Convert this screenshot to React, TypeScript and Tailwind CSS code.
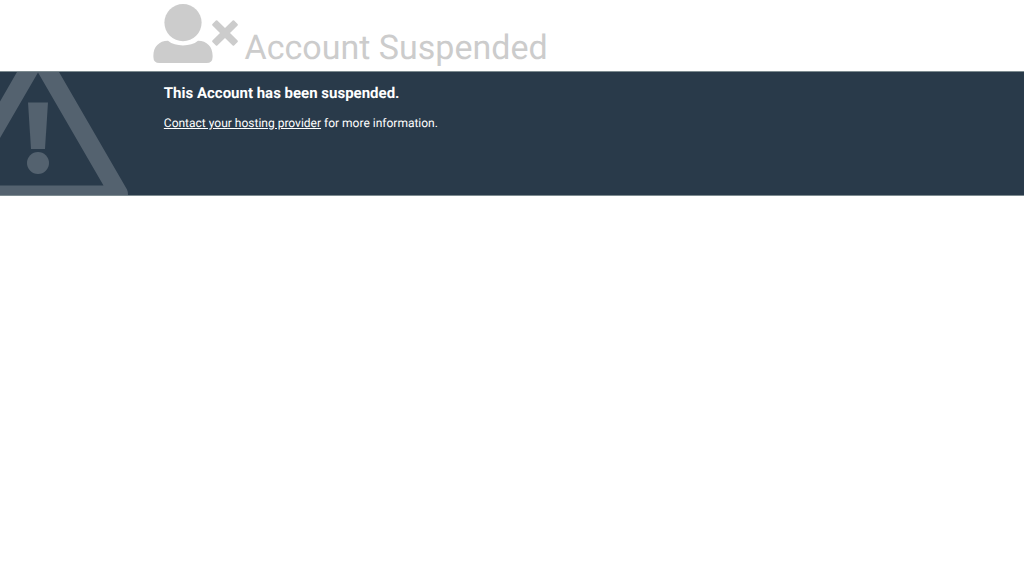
function SuspendedUserIcon() {
  return (
    <svg
      aria-hidden="true"
      viewBox="1 0 85 60"
      className="h-[60px] w-[85px] shrink-0 overflow-visible fill-[#cccccc]"
    >
      <circle cx="30" cy="18.6" r="18.6" />
      <path d="M15 36.8C19 40.2 24 41.4 30 41.4S41 40.2 45 36.8C54 36.8 59.6 43 59.6 51.5V53Q59.6 59 53.5 59H6.5Q.4 59 .4 53V51.5C.4 43 6 36.8 15 36.8Z" />
      <path d="M64.3 16.6L72 24.1L79.7 16.6Q80.4 16 81.1 16.6L84.6 20.1Q85.2 20.8 84.6 21.5L77 29L84.6 36.5Q85.2 37.2 84.6 37.9L81.1 41.4Q80.4 42 79.7 41.4L72 33.9L64.3 41.4Q63.6 42 62.9 41.4L59.4 37.9Q58.8 37.2 59.4 36.5L67 29L59.4 21.5Q58.8 20.8 59.4 20.1L62.9 16.6Q63.6 16 64.3 16.6Z" />
    </svg>
  );
}

function WarningIcon() {
  return (
    <svg
      aria-hidden="true"
      viewBox="0 0 128 123"
      className="h-[123px] w-32 fill-[#54626f]"
    >
      <path
        fillRule="evenodd"
        d="M17 0H59L127 117.5Q128 119.5 128 123H0V113.5H103.5L38 .5L0 66V29.5Z"
      />
      <path d="M28 30.5H48L45 77H31Z" />
      <circle cx="38" cy="91" r="11" />
    </svg>
  );
}

export default function App() {
  return (
    <div className="bg-white font-[Roboto,sans-serif] [text-rendering:geometricPrecision]">
      <header className="flex items-end gap-1.5 pt-1 pb-[7px] pl-[15%] text-[#cccccc]">
        <SuspendedUserIcon />
        <h1 className="text-[34px] leading-8 font-normal">Account Suspended</h1>
      </header>
      <main className="flex border-y border-[#7d8b90] bg-[#293a4a] text-white">
        <div className="w-[16%] shrink-0">
          <WarningIcon />
        </div>
        <section className="pt-[11px]">
          <h2 className="text-[15px] leading-5 font-bold">
            This Account has been suspended.
          </h2>
          <p className="mt-3 text-xs leading-4">
            <a href="#contact" className="underline">
              Contact your hosting provider
            </a>{" "}
            for more information.
          </p>
        </section>
      </main>
    </div>
  );
}
